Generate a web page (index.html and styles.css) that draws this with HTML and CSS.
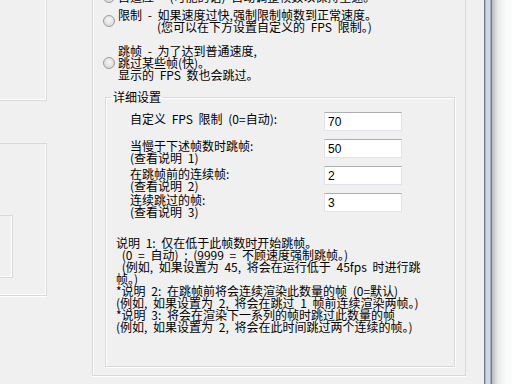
FILE: index.html
```html
<!DOCTYPE html>
<html lang="zh-CN">
<head>
    <meta charset="UTF-8">
    <title>帧数设置</title>
    <link rel="stylesheet" href="styles.css">
</head>
<body>
    <div class="screen">
        <div class="desk">
            <div class="side">
                <div class="frame-top"></div>
                <div class="frame-mid">
                    <div class="frame-inner"></div>
                </div>
            </div>

            <div class="panel">
                <div class="option">
                    <span class="radio"></span>
                    <div class="option-text">自适应 - (可能的话) 自动调整帧数以保持全速。</div>
                </div>
                <div class="option opt-limit">
                    <span class="radio"></span>
                    <div class="option-text">限制 - 如果速度过快,强制限制帧数到正常速度。<br><span class="indent">(您可以在下方设置自定义的 FPS 限制。)</span></div>
                </div>
                <div class="option opt-skip">
                    <span class="radio"></span>
                    <div class="option-text">跳帧 - 为了达到普通速度,<br>跳过某些帧(快)。<br>显示的 FPS 数也会跳过。</div>
                </div>

                <fieldset class="details">
                    <legend>详细设置</legend>
                    <div class="rows">
                        <div class="row">
                            <label>自定义 FPS 限制 (0=自动):</label>
                            <input type="text" value="70">
                        </div>
                        <div class="row">
                            <label>当慢于下述帧数时跳帧:<br>(查看说明 1)</label>
                            <input type="text" value="50">
                        </div>
                        <div class="row">
                            <label class="low">在跳帧前的连续帧:<br>(查看说明 2)</label>
                            <input type="text" value="2">
                        </div>
                        <div class="row">
                            <label>连续跳过的帧:<br>(查看说明 3)</label>
                            <input type="text" value="3">
                        </div>
                    </div>
<div class="notes">说明 1: 仅在低于此帧数时开始跳帧。
 (0 = 自动) ; (9999 = 不顾速度强制跳帧。)
 (例如, 如果设置为 45, 将会在运行低于 45fps 时进行跳
帧。)
*说明 2: 在跳帧前将会连续渲染此数量的帧 (0=默认)
(例如, 如果设置为 2, 将会在跳过 1 帧前连续渲染两帧。)
*说明 3: 将会在渲染下一系列的帧时跳过此数量的帧
(例如, 如果设置为 2, 将会在此时间跳过两个连续的帧。)</div>
                </fieldset>
            </div>
        </div>
        <div class="edge"></div>
        <div class="outside"></div>
    </div>
</body>
</html>
```

FILE: styles.css
```css
body {
    margin: 0;
    font-family: "Noto Sans CJK SC", "Noto Sans", sans-serif;
    font-size: 12px;
    line-height: 12px;
    word-spacing: 3px;
    color: #000;
}
.screen {
    display: flex;
    width: 512px;
    height: 384px;
    overflow: hidden;
}
.desk {
    width: 484px;
    display: flex;
    align-items: flex-start;
    background: #f0f0f0;
}

/* left frames, cut off by the window edge */
.side {
    width: 47px;
    flex: none;
}
.frame-top {
    height: 101px;
    border-right: 1px solid #d9d9d9;
    border-bottom: 1px solid #d9d9d9;
    box-shadow: inset -1px -1px 0 #fff;
    box-sizing: border-box;
}
.frame-mid {
    margin-top: 42px;
    height: 153px;
    padding-top: 71px;
    border: 1px solid #d9d9d9;
    border-left: none;
    box-shadow: inset -1px -1px 0 #fff, 0 1px 0 #fff;
    box-sizing: border-box;
}
.frame-inner {
    width: 13px;
    height: 63px;
    border: 1px solid #d9d9d9;
    border-left: none;
    box-shadow: inset -1px -1px 0 #fff;
    box-sizing: border-box;
}

/* main panel */
.panel {
    flex: none;
    width: 374px;
    margin-left: 45px;
    margin-top: -20px;
    padding: 10px 0 8px 10px;
    border: 1px solid #d9d9d9;
    box-shadow: inset 1px 1px 0 #fff, 0 1px 0 #fff;
    box-sizing: border-box;
}
.option {
    display: flex;
    align-items: center;
    gap: 3px;
}
.opt-limit {
    margin-top: 6px;
}
.opt-skip {
    margin-top: 12px;
}
.radio {
    width: 12px;
    height: 12px;
    flex: none;
    border-radius: 50%;
    border: 1px solid #9a9a9a;
    box-sizing: border-box;
    background: radial-gradient(circle at 50% 40%, #f6f6f6 0, #e2e2e2 55%, #cfcfcf 100%);
}
.option-text {
    white-space: nowrap;
}
.indent {
    padding-left: 39px;
}

/* group box */
.details {
    margin: 10px 0 0 2px;
    padding: 0 0 33px 0;
    width: 350px;
    box-sizing: border-box;
    border: 1px solid #d9d9d9;
    box-shadow: inset 1px 1px 0 #fff, 1px 1px 0 #fff;
}
.details legend {
    margin-left: 5px;
    padding: 0 2px;
    word-spacing: 0;
}
.rows {
    margin-top: 9px;
    padding-left: 24px;
}
.row {
    display: flex;
    align-items: flex-start;
    height: 27px;
}
.row label {
    width: 194px;
    flex: none;
    margin-top: 1px;
    white-space: nowrap;
}
.row label.low {
    margin-top: 2px;
}
.row input {
    width: 78px;
    height: 19px;
    box-sizing: border-box;
    margin: 0;
    padding: 0 3px;
    border: 1px solid #e2e3ea;
    border-top-color: #abadb3;
    background: #fff;
    font-family: "Liberation Sans", sans-serif;
    font-size: 12px;
    color: #000;
}
.notes {
    margin-top: 17px;
    padding-left: 10px;
    white-space: pre;
}

/* window edge on the right */
.edge {
    width: 8px;
    flex: none;
    background: linear-gradient(to right, #6e7c8c 0 1px, #a9b6c4 1px 2px, #cbd6e2 2px 6px, #a4b0bd 6px 7px, #6f7b88 7px 8px);
}
.outside {
    flex: 1;
    background: linear-gradient(to right, #b9bcc0, #e9eaeb 6px, #fbfbfb 14px);
}
```
